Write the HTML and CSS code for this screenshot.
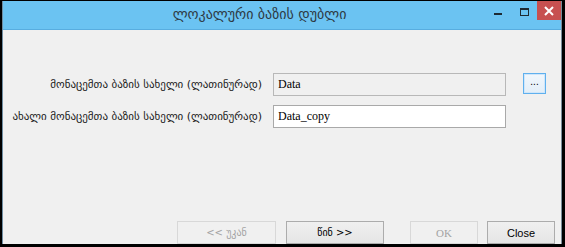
FILE: index.html
```html
<!DOCTYPE html>
<html lang="ka">
<head>
  <meta charset="UTF-8">
  <title>ლოკალური ბაზის დუბლი</title>
  <link rel="stylesheet" href="styles.css">
</head>
<body>

<div class="window">
  <!-- title bar -->
  <div class="titlebar">
    <span class="title">ლოკალური ბაზის დუბლი</span>
    <div class="controls">
      <span class="ctl ctl-min"><span class="min-bar"></span></span>
      <span class="ctl ctl-max"><span class="max-box"></span></span>
      <span class="ctl ctl-close">
        <svg width="10" height="10" viewBox="0 0 10 10">
          <path d="M1 1 L9 9 M9 1 L1 9" stroke="#fff" stroke-width="2"/>
        </svg>
      </span>
    </div>
  </div>

  <div class="content">
    <div class="form">
      <label class="label" for="srcName">მონაცემთა ბაზის სახელი (ლათინურად)</label>
      <input id="srcName" class="field field-ro" type="text" value="Data" readonly>
      <button class="browse">...</button>

      <label class="label" for="newName">ახალი მონაცემთა ბაზის სახელი (ლათინურად)</label>
      <input id="newName" class="field" type="text" value="Data_copy">
    </div>

    <div class="actions">
      <button class="btn btn-back" disabled>&lt;&lt; უკან</button>
      <button class="btn btn-next">წინ &gt;&gt;</button>
      <button class="btn btn-ok" disabled>OK</button>
      <button class="btn btn-close">Close</button>
    </div>
  </div>
</div>

</body>
</html>
```

FILE: styles.css
```css
html, body {
  margin: 0;
  padding: 0;
}

body {
  background-color: #000;
  width: 565px;
  height: 247px;
  overflow: hidden;
}

.window {
  margin: 1px 3px 0 2px;
  height: 243px;
  background-color: #f0f0f0;
  border-left: 1px solid #6f8ea3;
  border-right: 1px solid #7a8c99;
  display: flex;
  flex-direction: column;
  box-sizing: border-box;
}

/* title bar */
.titlebar {
  height: 28px;
  background-color: #6bc3f2;
  border-bottom: 1px solid #58ade0;
  display: flex;
  align-items: center;
  justify-content: center;
  position: relative;
  flex-shrink: 0;
}

.title {
  font-family: "DejaVu Sans", sans-serif;
  font-size: 14px;
  color: #2e3a44;
  margin-left: -45px;
  margin-top: -2px;
}

.controls {
  position: absolute;
  top: 0;
  right: 0;
  display: flex;
  height: 19px;
}

.ctl {
  display: flex;
  align-items: center;
  justify-content: center;
  height: 19px;
}

.ctl-min {
  width: 26px;
}

.min-bar {
  width: 8px;
  height: 2px;
  background: #1d2a33;
  margin-top: 6px;
}

.ctl-max {
  width: 26px;
}

.max-box {
  width: 7px;
  height: 5px;
  border: 1px solid #1d2a33;
  border-top-width: 2px;
  margin-top: 2px;
}

.ctl-close {
  width: 24px;
  background-color: #c75050;
}

/* form */
.content {
  flex: 1;
  display: flex;
  flex-direction: column;
  padding: 43px 0 0 0;
}

.form {
  display: grid;
  grid-template-columns: 259px 233px 23px;
  column-gap: 11px;
  row-gap: 9px;
  align-items: center;
}

.label {
  font-family: "DejaVu Sans", sans-serif;
  font-size: 11px;
  color: #1a1a1a;
  text-align: right;
  white-space: nowrap;
  margin-right: 0;
}

.field {
  height: 23px;
  box-sizing: border-box;
  border: 1px solid #a9a9a9;
  background: #fff;
  font-family: "Liberation Serif", serif;
  font-size: 12px;
  color: #000;
  padding: 0 0 0 4px;
  margin: 0;
  outline: none;
}

.field-ro {
  background: #f0f0f0;
  border-color: #b8b8b8;
}

.browse {
  width: 23px;
  height: 21px;
  margin: -2px 0 0 6px;
  padding: 0 0 4px 0;
  border: 1px solid #5fb0ee;
  background: linear-gradient(#f1f7fc, #e3eef8);
  font-family: "Liberation Sans", sans-serif;
  font-size: 10px;
  color: #000;
  box-shadow: inset 0 0 0 1px #cfe6fa;
}

/* bottom buttons */
.actions {
  margin-top: auto;
  display: flex;
  padding-left: 174px;
}

.btn {
  height: 23px;
  box-sizing: border-box;
  margin: 0;
  padding: 0;
  border: 1px solid #acacac;
  background: linear-gradient(#f0f0f0, #e5e5e5);
  font-size: 11px;
  color: #000;
}

.btn:disabled {
  border-color: #d8d8d8;
  background: #f0f0f0;
  color: #a3a3a3;
}

.btn-back {
  width: 99px;
  font-family: "DejaVu Sans", sans-serif;
  font-size: 10px;
}

.btn-next {
  width: 98px;
  margin-left: 10px;
  font-family: "DejaVu Sans", sans-serif;
  font-size: 10px;
}

.btn-ok {
  width: 68px;
  margin-left: 26px;
  font-family: "Liberation Serif", serif;
  font-size: 11px;
}

.btn-close {
  width: 68px;
  margin-left: 9px;
  font-family: "Liberation Sans", sans-serif;
  font-size: 11px;
}
```
